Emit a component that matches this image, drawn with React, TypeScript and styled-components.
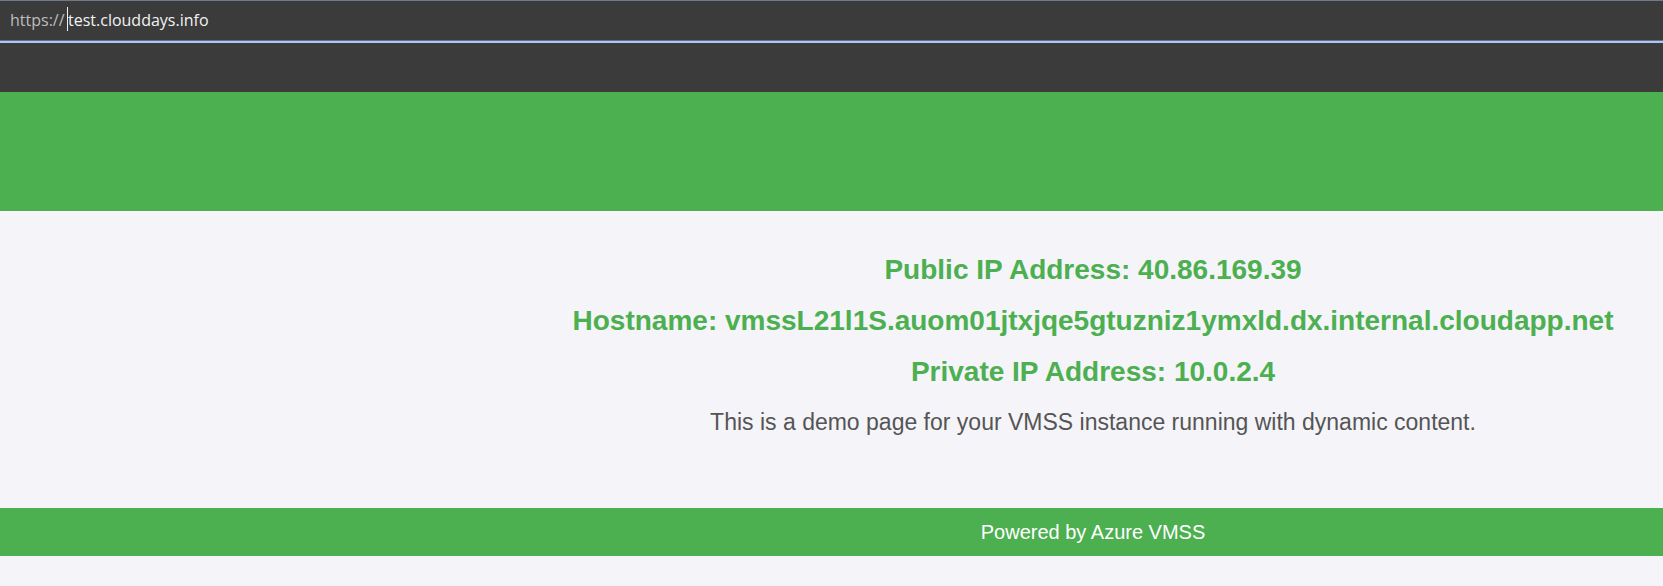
import React, { useState } from "react";
import styled, { createGlobalStyle } from "styled-components";

const GlobalStyle = createGlobalStyle`
  *, *::before, *::after { box-sizing: border-box; }
  body {
    margin: 0;
    background: #f4f4f9;
    font-family: "Liberation Sans", Arial, sans-serif;
    overflow-x: hidden;
  }
`;

const AddressBar = styled.form`
  display: flex;
  align-items: center;
  height: 43px;
  padding: 0 10px 2px;
  background: #3b3b3b;
  border-top: 1px solid #6f7a88;
  border-bottom: 2px solid #a9c8f4;
  box-shadow: inset 0 -1px 0 #64708c;
  font-family: "Open Sans", "Noto Sans", sans-serif;
  font-size: 16px;
`;

const Scheme = styled.label`
  min-width: 57px;
  color: #bdbdbd;
`;

const Caret = styled.span`
  width: 1px;
  height: 24px;
  margin-bottom: 2px;
  background: #f2f2f2;
`;

const AddressInput = styled.input`
  flex: 1;
  min-width: 0;
  padding: 0;
  border: 0;
  outline: 0;
  background: transparent;
  color: #f2f2f2;
  font: inherit;
`;

const Toolbar = styled.div`
  height: 49px;
  background: #3b3b3b;
`;

const Banner = styled.header`
  height: 119px;
  background: #4caf50;
`;

const Content = styled.main`
  padding: 41px 0 69px 523px;
  text-align: center;
  white-space: nowrap;
`;

const Detail = styled.h2`
  margin: 0 0 16px;
  color: #4caf50;
  font-size: 28px;
  line-height: 35px;
`;

const Description = styled.p`
  margin: 0;
  color: #555;
  font-size: 23px;
  line-height: 34px;
`;

const Footer = styled.footer`
  padding: 12px 0 12px 523px;
  background: #4caf50;
  color: #fff;
  font-size: 20px;
  line-height: 24px;
  text-align: center;
`;

const details = [
  { label: "Public IP Address", value: "40.86.169.39" },
  { label: "Hostname", value: "vmssL21l1S.auom01jtxjqe5gtuzniz1ymxld.dx.internal.cloudapp.net" },
  { label: "Private IP Address", value: "10.0.2.4" },
];

export default function App() {
  const [address, setAddress] = useState("test.clouddays.info");

  return (
    <>
      <GlobalStyle />
      <AddressBar onSubmit={(event) => event.preventDefault()}>
        <Scheme htmlFor="address">https://</Scheme>
        <Caret />
        <AddressInput
          id="address"
          type="text"
          spellCheck={false}
          value={address}
          onChange={(event) => setAddress(event.target.value)}
        />
      </AddressBar>
      <Toolbar />
      <Banner />
      <Content>
        {details.map(({ label, value }) => (
          <Detail key={label}>{`${label}: ${value}`}</Detail>
        ))}
        <Description>This is a demo page for your VMSS instance running with dynamic content.</Description>
      </Content>
      <Footer>Powered by Azure VMSS</Footer>
    </>
  );
}
